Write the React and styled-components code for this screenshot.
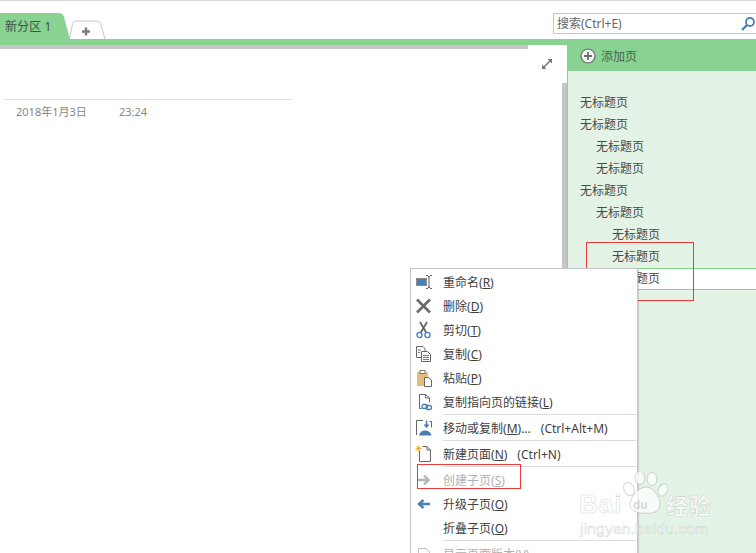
import styled, { createGlobalStyle } from 'styled-components'

const GlobalStyle = createGlobalStyle`
  html, body { margin: 0; padding: 0; background: #fff; overflow: hidden; }
  * { box-sizing: border-box; }
`

const FONT = `"Noto Sans", "Noto Sans CJK SC", sans-serif`

const Page = styled.div`
  position: relative;
  width: 756px;
  height: 553px;
  overflow: hidden;
  display: flex;
  flex-direction: column;
  font-family: ${FONT};
  font-size: 12px;
  color: #5f5f5f;
  border-top: 1px solid #d6d6d6;
`

const TabRow = styled.div`
  height: 38px;
  display: flex;
  align-items: flex-end;
  justify-content: space-between;
`

const Tabs = styled.div`
  display: flex;
  align-items: flex-end;
`

const SectionTab = styled.div`
  position: relative;
  width: 70px;
  height: 26px;
  padding: 5px 0 0 5px;
  line-height: 17px;
  color: #465046;
  letter-spacing: 0.1px;
  background: #88d292;
  clip-path: path('M0 0 H59 Q63 0 64 4 L70 26 H0 Z');
`

const AddTabWrap = styled.div`
  width: 37px;
  height: 19px;
  margin-left: -1px;
  display: flex;
`

const SearchBox = styled.div`
  width: 204px;
  height: 21px;
  margin: 0 -1px 5px 0;
  padding-left: 3px;
  display: flex;
  align-items: center;
  justify-content: space-between;
  line-height: 18px;
  color: #666;
  border: 1px solid #c6c6c6;
  background: #fff;
`

const GreenBar = styled.div`
  height: 6px;
  background: #88d292;
`

const Body = styled.div`
  flex: 1;
  display: flex;
  min-height: 0;
`

const Main = styled.div`
  width: 567px;
  display: flex;
  flex-direction: column;
`

const GreyStrip = styled.div`
  width: 528px;
  height: 4px;
  background: #c6c6c6;
`

const ExpandRow = styled.div`
  height: 34px;
  padding: 9px 14px 0 0;
  display: flex;
  justify-content: flex-end;
  align-items: flex-start;
`

const NoteArea = styled.div`
  flex: 1;
  display: flex;
  justify-content: space-between;
  min-height: 0;
`

const NoteHead = styled.div`
  width: 288px;
  height: 36px;
  margin: 16px 0 0 4px;
  padding: 3px 0 0 12px;
  display: flex;
  border-top: 1px solid #e1e1e1;
  color: #858585;
  font-size: 11px;
  line-height: 17px;
`

const DateText = styled.span`
  width: 103px;
`

const Scrollbar = styled.div`
  width: 5px;
  background: #c6c6c6;
`

const Sidebar = styled.div`
  flex: 1;
  display: flex;
  flex-direction: column;
`

const AddPage = styled.div`
  height: 26px;
  padding: 0 0 4px 13px;
  display: flex;
  align-items: center;
  gap: 5px;
  color: #4f6351;
  background: #88d292;
`

const PageList = styled.div`
  flex: 1;
  padding-top: 21px;
  background: #e3f3e6;
  border-left: 1px solid #88d292;
`

const PageRow = styled.div`
  height: 22px;
  padding-left: ${p => 12 + p.$level * 16}px;
  line-height: 21px;
  color: #4a4a4a;
  background: ${p => (p.$active ? '#fff' : 'transparent')};
  box-shadow: ${p => (p.$active ? 'inset 0 1px 0 #88d292, inset 0 -1px 0 #88d292' : 'none')};
`

const Menu = styled.div`
  position: absolute;
  left: 410px;
  top: 267px;
  width: 228px;
  padding-top: 1px;
  background: #fff;
  border: 1px solid #c6c6c6;
  box-shadow: 1px 1px 1px rgba(0, 0, 0, 0.12);
`

const MenuRow = styled.div`
  height: 24px;
  display: flex;
  align-items: center;
  color: ${p => (p.$disabled ? '#b1b1b1' : '#404040')};
`

const IconCell = styled.span`
  width: 32px;
  height: 24px;
  padding-left: 4px;
  display: flex;
  align-items: center;
`

const Key = styled.span`
  text-decoration: underline;
  text-underline-offset: 1px;
`

const Shortcut = styled.span`
  margin-left: ${p => p.$gap}px;
`

const MenuSep = styled.div`
  height: 2px;
  margin-left: 32px;
  margin-right: 1px;
  border-top: 1px solid #dcdcdc;
`

const RedBox = styled.div`
  position: absolute;
  left: ${p => p.$x}px;
  top: ${p => p.$y}px;
  width: ${p => p.$w}px;
  height: ${p => p.$h}px;
  border: 1px solid #f03a3a;
`

const Watermark = styled.div`
  position: absolute;
  left: 578px;
  top: 471px;
  width: 136px;
  height: 66px;
  color: rgba(255, 255, 255, 0.8);
  -webkit-text-stroke: 0.6px rgba(170, 170, 170, 0.45);
  font-family: "Liberation Sans", sans-serif;
`

const Paw = styled.svg`
  position: absolute;
  left: 44px;
  top: 0;
`

const WmBrand = styled.div`
  position: absolute;
  left: 1px;
  top: 17px;
  font-size: 26px;
  font-weight: 700;
  line-height: 30px;
  letter-spacing: 1px;
`

const WmDu = styled.span`
  position: absolute;
  left: 55px;
  top: 26px;
  font-size: 12px;
  font-weight: 700;
  line-height: 14px;
  color: rgba(190, 200, 190, 0.7);
  -webkit-text-stroke: 0;
`

const WmCn = styled.div`
  position: absolute;
  left: 88px;
  top: 18px;
  font-family: "Noto Sans CJK SC", sans-serif;
  font-size: 22px;
  font-weight: 700;
  line-height: 28px;
  letter-spacing: 1px;
  white-space: nowrap;
`

const WmUrl = styled.div`
  position: absolute;
  left: 2px;
  top: 48px;
  font-size: 15.5px;
  line-height: 18px;
  letter-spacing: 0.2px;
  white-space: nowrap;
`

function AddTabShape() {
  return (
    <svg width="37" height="19" viewBox="0 0 37 19">
      <path d="M0.5 19 L3.5 4 Q4.2 1 7 1 H28 Q31 1 31.7 4 L36 19" fill="#fff" stroke="#c6c6c6" />
      <path d="M18 8v8M14 12h8" stroke="#7b7b7b" strokeWidth="2.4" transform="translate(-1 -0.5)" />
    </svg>
  )
}

function SearchIcon() {
  return (
    <svg width="16" height="16" viewBox="0 0 16 16">
      <circle cx="10" cy="6" r="4" fill="none" stroke="#4a7fb5" strokeWidth="1.8" />
      <path d="M7 9L2 14" stroke="#4a7fb5" strokeWidth="2.4" />
    </svg>
  )
}

function ExpandIcon() {
  return (
    <svg width="12" height="12" viewBox="0 0 12 12">
      <path d="M2 10L10 2" stroke="#777" strokeWidth="1.6" />
      <path d="M6.5 1H11V5.5ZM1 6.5V11H5.5Z" fill="#777" />
    </svg>
  )
}

function PlusCircle() {
  return (
    <svg width="16" height="16" viewBox="0 0 16 16">
      <circle cx="8" cy="8" r="7" fill="#eef5ee" stroke="#6c6c6c" strokeWidth="1.2" />
      <path d="M8 4v8M4 8h8" stroke="#6c6c6c" strokeWidth="1.8" />
    </svg>
  )
}

const icons = {
  rename: (
    <svg width="18" height="18" viewBox="0 0 18 18">
      <rect x="1.5" y="5.5" width="10" height="7" fill="#4a7fb5" stroke="#8a8a8a" />
      <path d="M11 2.5h1.5L14 4L15.500 2.500H17M11 15.500h1.500L14 14L15.500 15.500H17M14 4v10" stroke="#555" fill="none" />
    </svg>
  ),
  del: (
    <svg width="18" height="18" viewBox="0 0 18 18">
      <path d="M2 2.500L15 15.500M15 2.500L2 15.500" stroke="#6b6b6b" strokeWidth="2.600" />
    </svg>
  ),
  cut: (
    <svg width="18" height="18" viewBox="0 0 18 18">
      <path d="M5 1L11.500 12M12 1L5.500 12" stroke="#666" strokeWidth="1.800" />
      <circle cx="4.500" cy="14" r="2.600" fill="none" stroke="#4a7fb5" strokeWidth="1.300" />
      <circle cx="12.500" cy="14" r="2.600" fill="none" stroke="#4a7fb5" strokeWidth="1.300" />
    </svg>
  ),
  copy: (
    <svg width="18" height="18" viewBox="0 0 18 18">
      <path d="M1.500 1.500H8L10 3.500V12.500H1.500Z" fill="#fff" stroke="#666" />
      <path d="M6.500 6.500H12.500L15.500 9.500V16.500H6.500Z" fill="#fff" stroke="#666" />
      <path d="M8 10.500h6M8 12.500h6M8 14.500h6M3 5h3M3 7.500h2" stroke="#5c7fa3" />
    </svg>
  ),
  paste: (
    <svg width="18" height="18" viewBox="0 0 18 18">
      <rect x="2" y="3" width="11" height="14" fill="#e6bd78" />
      <rect x="5" y="1.500" width="5" height="3" fill="#fff" stroke="#777" />
      <path d="M9.500 8.500H13.500L16.500 11V17.500H9.500Z" fill="#fff" stroke="#666" />
    </svg>
  ),
  link: (
    <svg width="18" height="18" viewBox="0 0 18 18">
      <path d="M4.500 15.500V1.500H10.500L14.500 5V9.500M4.500 15.500H6.500" fill="none" stroke="#666" />
      <path d="M10.500 1.500V5H14.500" fill="none" stroke="#666" />
      <rect x="7" y="11.500" width="5.500" height="4" rx="2" fill="none" stroke="#4a7fb5" strokeWidth="1.300" />
      <rect x="11" y="12.500" width="5.500" height="4" rx="2" fill="none" stroke="#4a7fb5" strokeWidth="1.300" />
    </svg>
  ),
  move: (
    <svg width="18" height="18" viewBox="0 0 18 18">
      <path d="M8 1.500H1.500V16" fill="none" stroke="#666" />
      <path d="M4 16.500C5 12.500 7.500 11.500 10 11.500S15.500 12.500 16.500 16.500Z" fill="#4a7fb5" />
      <path d="M11.500 1.500v6M9.500 5.500L11.500 8L13.500 5.500" fill="none" stroke="#4a7fb5" strokeWidth="1.500" />
      <path d="M14.500 2.500H16.500V8.500" fill="none" stroke="#666" />
    </svg>
  ),
  newPage: (
    <svg width="18" height="18" viewBox="0 0 18 18">
      <path d="M4.500 6V16.500H15.500V5L12 1.500H7.500" fill="#fff" stroke="#666" />
      <path d="M12 1.500V5H15.500" fill="none" stroke="#666" />
      <path d="M3.500 0.500v6M0.500 3.500h6M1.500 1.500l4 4M5.500 1.500l-4 4" stroke="#e8b04f" />
    </svg>
  ),
  right: (
    <svg width="18" height="18" viewBox="0 0 18 18">
      <path d="M2 9H13M9 4.500L13.500 9L9 13.500" fill="none" stroke="#b5b5b5" strokeWidth="2.400" />
    </svg>
  ),
  left: (
    <svg width="18" height="18" viewBox="0 0 18 18">
      <path d="M15 9H5M8.500 5L4 9L8.500 13" fill="none" stroke="#4a7fb5" strokeWidth="2.400" />
    </svg>
  ),
  version: (
    <svg width="18" height="18" viewBox="0 0 18 18">
      <path d="M3.500 3.500H11L14.500 7V17H3.500Z" fill="#fff" stroke="#bdbdbd" />
      <path d="M5 9h8M5 11.500h8" stroke="#c9c9c9" />
    </svg>
  ),
}

function MenuItem({ icon, label, hotkey, suffix = '', shortcut, gap = 10, disabled }) {
  return (
    <MenuRow $disabled={disabled}>
      <IconCell>{icons[icon]}</IconCell>
      <span>
        {label}(<Key>{hotkey}</Key>){suffix}
      </span>
      {shortcut && <Shortcut $gap={gap}>{shortcut}</Shortcut>}
    </MenuRow>
  )
}

const pages = [0, 0, 1, 1, 0, 1, 2, 2, 2]

export default function App() {
  return (
    <Page>
      <GlobalStyle />
      <TabRow>
        <Tabs>
          <SectionTab>新分区 1</SectionTab>
          <AddTabWrap>
            <AddTabShape />
          </AddTabWrap>
        </Tabs>
        <SearchBox>
          搜索(Ctrl+E)
          <SearchIcon />
        </SearchBox>
      </TabRow>
      <GreenBar />
      <Body>
        <Main>
          <GreyStrip />
          <ExpandRow>
            <ExpandIcon />
          </ExpandRow>
          <NoteArea>
            <NoteHead>
              <DateText>2018年1月3日</DateText>
              <span>23:24</span>
            </NoteHead>
            <Scrollbar />
          </NoteArea>
        </Main>
        <Sidebar>
          <AddPage>
            <PlusCircle />
            添加页
          </AddPage>
          <PageList>
            {pages.map((level, i) => (
              <PageRow key={i} $level={level} $active={i === 8}>
                无标题页
              </PageRow>
            ))}
          </PageList>
        </Sidebar>
      </Body>

      <RedBox $x={586} $y={241} $w={108} $h={59} />
      <Menu>
        <MenuItem icon="rename" label="重命名" hotkey="R" />
        <MenuItem icon="del" label="删除" hotkey="D" />
        <MenuItem icon="cut" label="剪切" hotkey="T" />
        <MenuItem icon="copy" label="复制" hotkey="C" />
        <MenuItem icon="paste" label="粘贴" hotkey="P" />
        <MenuItem icon="link" label="复制指向页的链接" hotkey="L" />
        <MenuSep />
        <MenuItem icon="move" label="移动或复制" hotkey="M" suffix="..." shortcut="(Ctrl+Alt+M)" />
        <MenuSep />
        <MenuItem icon="newPage" label="新建页面" hotkey="N" shortcut="(Ctrl+N)" />
        <MenuSep />
        <MenuItem icon="right" label="创建子页" hotkey="S" disabled />
        <MenuItem icon="left" label="升级子页" hotkey="O" />
        <MenuItem label="折叠子页" hotkey="O" />
        <MenuSep />
        <MenuItem icon="version" label="显示页面版本" hotkey="V" disabled />
      </Menu>
      <RedBox $x={417} $y={463} $w={104} $h={25} />

      <Watermark>
        <Paw width="46" height="44" viewBox="0 0 46 44">
          <g fill="rgba(255,255,255,0.75)" stroke="rgba(170,170,170,0.5)">
            <ellipse cx="7" cy="17" rx="5" ry="7" transform="rotate(-25 7 17)" />
            <ellipse cx="18" cy="6" rx="5" ry="6.5" />
            <ellipse cx="30" cy="7" rx="5" ry="6.5" />
            <ellipse cx="41" cy="18" rx="4.5" ry="6.5" transform="rotate(25 41 18)" />
            <path d="M24 15C31 15 38 25 38 32C38 40 30 42 24 41C18 42 8 40 8 32C8 25 17 15 24 15Z" />
          </g>
        </Paw>
        <WmBrand>Bai</WmBrand>
        <WmDu>du</WmDu>
        <WmCn>经验</WmCn>
        <WmUrl>jingyan.baidu.com</WmUrl>
      </Watermark>
    </Page>
  )
}
